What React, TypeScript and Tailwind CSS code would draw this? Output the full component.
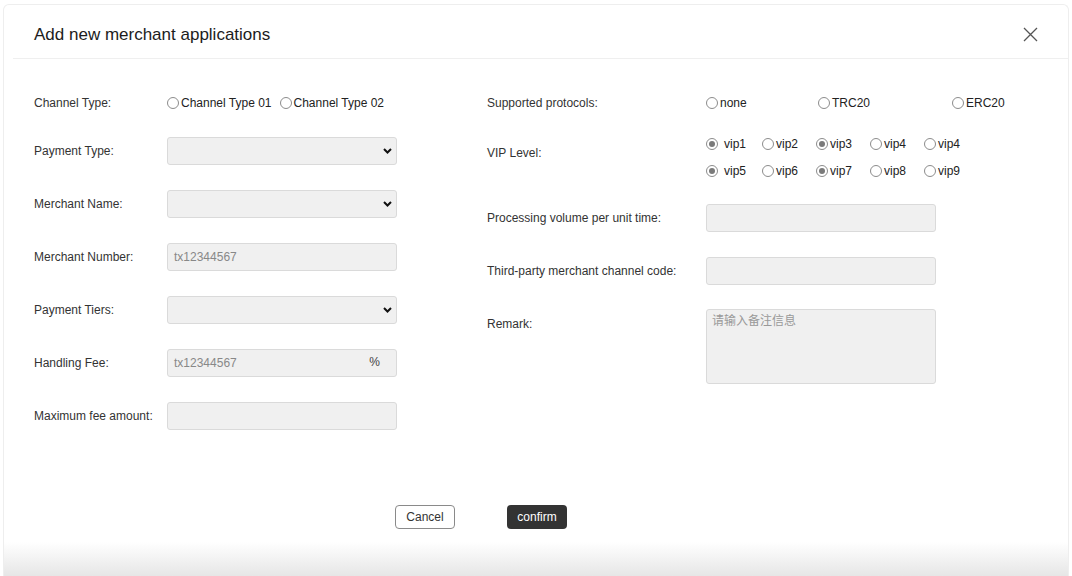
import React from 'react';

const font = { fontFamily: '"Liberation Sans", Arial, "Noto Sans CJK SC", sans-serif' };

const Radio = ({ label, checked = false, spaced = false }: { label: string; checked?: boolean; spaced?: boolean }) => (
  <span className="flex items-center text-[12px] text-[#222]">
    <span className="w-[12px] h-[12px] rounded-full border border-[#8c8c8c] flex items-center justify-center shrink-0">
      {checked && <span className="w-[6px] h-[6px] rounded-full bg-[#7a7a7a]" />}
    </span>
    <span className={spaced ? 'ml-[6px]' : 'ml-[2px]'}>{label}</span>
  </span>
);

const Chevron = () => (
  <svg width="9" height="6" viewBox="0 0 9 6" fill="none">
    <path d="M1 1l3.5 3.5L8 1" stroke="#111" strokeWidth="2" />
  </svg>
);

const Box = ({ children, select = false }: { children?: React.ReactNode; select?: boolean }) => (
  <div className="w-[230px] h-[28px] bg-[#f0f0f0] border border-[#dadada] rounded-[3px] flex items-center justify-between pl-[6px] pr-[4px] text-[12px] text-[#888]">
    <span>{children}</span>
    {select && <Chevron />}
  </div>
);

const Row = ({ label, className, children, w = 'w-[133px]' }: { label: string; className: string; children: React.ReactNode; w?: string }) => (
  <div className={`flex items-center h-[28px] ${className}`}>
    <span className={`${w} shrink-0 text-[12px] text-[#333]`}>{label}</span>
    {children}
  </div>
);

const App = () => {
  return (
    <div className="w-[1072px] h-[576px] bg-white overflow-hidden pt-[4px] px-[3px]" style={font}>
      <div className="h-[572px] border border-[#eeeeee] border-b-0 rounded-t-[6px] flex flex-col">
        <div className="h-[53px] flex items-center justify-between pl-[30px] pr-[30px] pt-[6px] shrink-0">
          <span className="text-[17px] text-[#1c1c1c]">Add new merchant applications</span>
          <svg width="15" height="15" viewBox="0 0 15 15" fill="none">
            <path d="M1 1l13 13M14 1L1 14" stroke="#555" strokeWidth="1.3" />
          </svg>
        </div>
        <div className="ml-[9px] border-t border-[#efefef]" />

        <div className="flex pl-[30px]">
          <div className="flex flex-col w-[363px]">
            <Row label="Channel Type:" className="mt-[30px]">
              <div className="flex items-center gap-[8px]">
                <Radio label="Channel Type 01" />
                <Radio label="Channel Type 02" />
              </div>
            </Row>
            <Row label="Payment Type:" className="mt-[20px]">
              <Box select />
            </Row>
            <Row label="Merchant Name:" className="mt-[25px]">
              <Box select />
            </Row>
            <Row label="Merchant Number:" className="mt-[25px]">
              <Box>tx12344567</Box>
            </Row>
            <Row label="Payment Tiers:" className="mt-[25px]">
              <Box select />
            </Row>
            <Row label="Handling Fee:" className="mt-[25px]">
              <div className="w-[230px] h-[28px] bg-[#f0f0f0] border border-[#dadada] rounded-[3px] flex items-center justify-between pl-[6px] pr-[16px] text-[12px] text-[#888]">
                <span>tx12344567</span>
                <span className="text-[#444] -mt-[3px]">%</span>
              </div>
            </Row>
            <Row label="Maximum fee amount:" className="mt-[25px]">
              <Box />
            </Row>
          </div>

          <div className="flex flex-col ml-[90px]">
            <Row label="Supported protocols:" className="mt-[30px]" w="w-[219px]">
              <div className="flex items-center">
                <span className="w-[112px]"><Radio label="none" /></span>
                <span className="w-[134px]"><Radio label="TRC20" /></span>
                <Radio label="ERC20" />
              </div>
            </Row>
            <div className="flex items-start mt-[17px]">
              <span className="w-[219px] shrink-0 text-[12px] text-[#333] mt-[10px]">VIP Level:</span>
              <div className="flex flex-col gap-[7px]">
                <div className="flex items-center h-[20px]">
                  <span className="w-[56px]"><Radio label="vip1" checked spaced /></span>
                  <span className="w-[54px]"><Radio label="vip2" /></span>
                  <span className="w-[54px]"><Radio label="vip3" checked /></span>
                  <span className="w-[54px]"><Radio label="vip4" /></span>
                  <Radio label="vip4" />
                </div>
                <div className="flex items-center h-[20px]">
                  <span className="w-[56px]"><Radio label="vip5" checked spaced /></span>
                  <span className="w-[54px]"><Radio label="vip6" /></span>
                  <span className="w-[54px]"><Radio label="vip7" checked /></span>
                  <span className="w-[54px]"><Radio label="vip8" /></span>
                  <Radio label="vip9" />
                </div>
              </div>
            </div>
            <Row label="Processing volume per unit time:" className="mt-[23px]" w="w-[219px]">
              <Box />
            </Row>
            <Row label="Third-party merchant channel code:" className="mt-[25px]" w="w-[219px]">
              <Box />
            </Row>
            <div className="flex items-start mt-[24px]">
              <span className="w-[219px] shrink-0 text-[12px] text-[#333] mt-[6px]">Remark:</span>
              <div className="w-[230px] h-[75px] bg-[#f0f0f0] border border-[#dadada] rounded-[3px] px-[5px] pt-[2px] text-[12px] text-[#999]">
                请输入备注信息
              </div>
            </div>
          </div>
        </div>

        <div className="flex items-center gap-[52px] ml-[391px] mt-[75px]">
          <button className="w-[60px] h-[24px] border border-[#8a8a8a] rounded-[4px] text-[12px] text-[#333] bg-white">
            Cancel
          </button>
          <button className="w-[60px] h-[24px] rounded-[4px] text-[12px] text-white bg-[#333]">
            confirm
          </button>
        </div>

        <div className="mt-auto h-[34px] bg-gradient-to-b from-white to-[#e6e6e6]" />
      </div>
    </div>
  );
};

export default App;
